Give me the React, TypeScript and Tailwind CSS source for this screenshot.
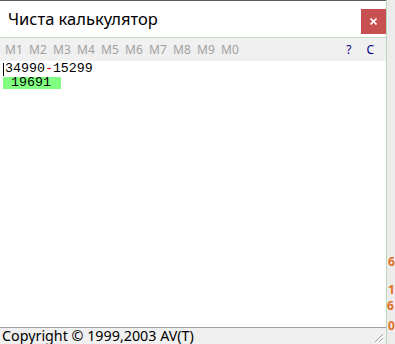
// App.tsx — "Чиста калькулятор" window
const memKeys = ['M1', 'M2', 'M3', 'M4', 'M5', 'M6', 'M7', 'M8', 'M9', 'M0']

function SizeGrip() {
  return (
    <svg width="11" height="11" viewBox="0 0 11 11" className="absolute right-[2px] bottom-[1px]">
      <path d="M10 2 L2 10 M10 6 L6 10" stroke="#a0a0a0" strokeWidth="1" />
      <path d="M10 4 L4 10 M10 8 L8 10" stroke="#ffffff" strokeWidth="1" />
    </svg>
  )
}

export default function App() {
  return (
    <div className="flex w-[395px] h-[344px] bg-[#ececec] overflow-hidden">
      {/* Window */}
      <div className="flex flex-col w-[386px] h-full bg-white border-t border-[#5a5a5a]">
        {/* Title bar */}
        <div className="flex items-start justify-between h-[37px] border-b border-[#c6dfc6]">
          <span className="pl-[8px] pt-[8px] text-[16.5px] leading-[20px] text-black font-['Noto_Sans',sans-serif]">
            Чиста калькулятор
          </span>
          <div className="mt-[8px] w-[25px] h-[25px] bg-[#c75050] flex items-center justify-center">
            <svg width="7" height="7" viewBox="0 0 7 7">
              <path d="M0.5 0.5 L6.5 6.5 M6.5 0.5 L0.5 6.5" stroke="#fff" strokeWidth="1.6" />
            </svg>
          </div>
        </div>

        {/* Memory toolbar */}
        <div className="flex items-center h-[23px] bg-[#f0f0f0] font-['Noto_Sans',sans-serif] text-[12px]">
          <div className="flex gap-[6px] pl-[5px] text-[#a0a0a0]">
            {memKeys.map((m) => (
              <span key={m} className="w-[18px]">{m}</span>
            ))}
          </div>
          <div className="ml-auto flex gap-[15px] pr-[12px] text-[#00008b]">
            <span>?</span>
            <span>C</span>
          </div>
        </div>

        {/* Editor */}
        <div className="flex-1 pl-[3px] pt-[1px] font-['Liberation_Mono',monospace] text-[13.3px] text-black">
          <div className="flex items-center h-[14px] leading-[14px]">
            <span className="w-px h-[13px] bg-black mr-[1px]" />
            <span>34990<span className="text-[#e00000]">-</span>15299</span>
          </div>
          <div className="mt-[1px] w-[58px] h-[12px] bg-[#80ff80] pl-[8px] leading-[12px]">19691</div>
        </div>

        {/* Status bar */}
        <div className="relative h-[17px] bg-[#f0f0f0] border-t border-[#a0a0a0] font-['Noto_Sans',sans-serif] text-[14.3px] leading-[15px] text-black pl-[2px]">
          Copyright © 1999,2003 AV(T)
          <SizeGrip />
        </div>
      </div>

      {/* Window edge */}
      <div className="w-px h-full bg-[#bcd8bc]" />

      {/* Desktop content behind */}
      <div className="relative flex-1 h-full font-['Noto_Sans',sans-serif] text-[12px] leading-[12px] font-bold text-[#e0701e]">
        <span className="absolute left-[1px] top-[256px]">6</span>
        <span className="absolute left-[1px] top-[284px]">1</span>
        <span className="absolute left-[0px] top-[300px]">6</span>
        <span className="absolute left-[1px] top-[320px]">0</span>
      </div>
    </div>
  )
}
